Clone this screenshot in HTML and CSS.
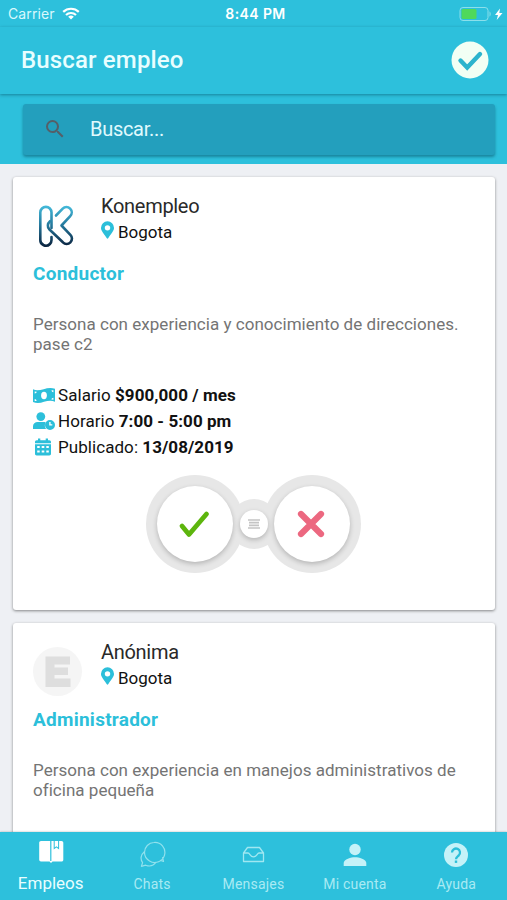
FILE: index.html
```html
<!DOCTYPE html>
<html lang="es">
<head>
<meta charset="utf-8">
<title>Buscar empleo</title>
<link rel="stylesheet" href="styles.css">
</head>
<body>
<div class="app">
  <div class="status">
    <div class="status-left"><span class="carrier">Carrier</span>
      <svg class="wifi" width="18" height="13" viewBox="0 0 18 13" fill="none" stroke="#fff" stroke-width="2.2"><path d="M1.2 4.9a11.2 11.2 0 0 1 15.6 0M4 8a7.2 7.2 0 0 1 10 0"/><path d="M9 12.6 6.2 9.8a4 4 0 0 1 5.6 0z" fill="#fff" stroke="none"/></svg>
    </div>
    <span class="clock">8:44 PM</span>
    <div class="status-right">
      <svg width="44" height="16" viewBox="0 0 44 16"><rect x="1" y="1.5" width="28" height="13" rx="3" fill="none" stroke="#8bdfeb"/><rect x="2.5" y="3" width="15" height="10" rx="1.5" fill="#4fd95b"/><path d="M30.5 5.5c1.6.6 1.6 4.4 0 5z" fill="#8bdfeb"/><path d="M41 2.5 36 9h3l-1.3 5L43.5 7h-3.2z" fill="#fff"/></svg>
    </div>
  </div>
  <header class="header">
    <h1 class="title">Buscar empleo</h1>
    <svg class="done" width="38" height="38" viewBox="0 0 38 38"><circle cx="19" cy="19" r="18.5" fill="#f2fff4"/><path d="m9.500 19.500 6.700 7L29 13" fill="none" stroke="#2cb4cd" stroke-width="4.400" stroke-linecap="round"/></svg>
  </header>
  <div class="search-area">
    <div class="search">
      <svg width="24" height="24" viewBox="0 0 24 24" fill="#555f68"><path d="M15.500 14h-.79l-.28-.27A6.470 6.470 0 0 0 16 9.500 6.500 6.500 0 1 0 9.500 16c1.610 0 3.090-.59 4.230-1.570l.27.28v.79l5 4.990L20.490 19l-4.990-5zm-6 0a4.500 4.500 0 1 1 0-9 4.500 4.500 0 0 1 0 9z"/></svg>
      <span class="placeholder">Buscar...</span>
    </div>
  </div>
  <main class="list">
    <article class="card">
      <div class="company">
        <svg class="logo" width="50" height="50" viewBox="0 0 50 50" fill="none" stroke="url(#k)" stroke-width="2.600" stroke-linecap="round" stroke-linejoin="round"><defs><linearGradient id="k" gradientUnits="userSpaceOnUse" x1="0" y1="5" x2="0" y2="46"><stop offset="0" stop-color="#45bddd"/><stop offset=".5" stop-color="#24779b"/><stop offset="1" stop-color="#0b2440"/></linearGradient></defs><path d="M18.500 28V12.500a5.600 5.600 0 0 0-11.200 0V40a5.600 5.600 0 0 0 9.600 4c1.100-1.100 1.600-2.300 1.600-4v-3"/><path d="m23 15.500 6.700-6.800a5.200 5.200 0 0 1 7.500 7.400L28.500 25.500l8.900 9.300a5.200 5.200 0 0 1-7.500 7.500L16.500 29.500c-2.500-2.600-2-6 .5-8.300"/></svg>
        <div class="who"><h2 class="name">Konempleo</h2><div class="place"><svg class="pin" width="13" height="18" viewBox="0 0 384 512"><path fill="#2cbfda" fill-rule="evenodd" d="M172 502C27 291 0 270 0 192a192 192 0 0 1 384 0c0 78-27 99-172 310-10 14-30 14-40 0zM192 272a80 80 0 1 0 0-160 80 80 0 0 0 0 160z"/></svg><span>Bogota</span></div></div>
      </div>
      <h3 class="job">Conductor</h3>
      <p class="desc">Persona con experiencia y conocimiento de direcciones.<br>pase c2</p>
      <ul class="facts">
        <li><svg width="22" height="17" viewBox="0 0 22 17"><path fill="#2cbfda" d="M0 2.300C7 5.800 14-1.600 22 1.800v13c-8-3.400-14 3.800-22 .3z"/><ellipse cx="11" cy="8.500" rx="2.900" ry="3.700" fill="#fff"/><path d="M1.700 4.500v2c1.200 0 1.900-.7 2-1.700zM1.700 14v-2c1 .1 1.800.9 1.900 2zM20.400 3.200v2.100c-1 0-1.800-.8-1.900-2zM20.400 12.700v-2c-1 .1-1.800.8-2 1.700z" fill="#fff"/></svg><span>Salario <b>$900,000 / mes</b></span></li>
        <li><svg width="22" height="18" viewBox="0 0 22 18" fill="#2cbfda"><circle cx="7.800" cy="4.600" r="4.400"/><path d="M0 17v-2.700c0-2.600 2.100-4.300 4.700-4.300h6.200c.8 0 1.300.1 1.800.4a6 6 0 0 0 .4 6.600z"/><path fill-rule="evenodd" d="M17 8a5 5 0 1 1 0 10 5 5 0 0 1 0-10zm-.8 2.100v3.500h3.100v-1.300h-1.700v-2.200z"/></svg><span>Horario <b>7:00 - 5:00 pm</b></span></li>
        <li><svg width="22" height="18" viewBox="1 0 22 18" fill="#2cbfda"><path fill-rule="evenodd" d="M3 6.300h16v9.500c0 1-.7 1.700-1.700 1.700H4.700c-1 0-1.700-.7-1.700-1.700zM5.200 8v2h2.500V8zm4.500 0v2h2.600V8zm4.600 0v2h2.500V8zm-9.100 4.500v2h2.500v-2zm4.500 0v2h2.600v-2zm4.600 0v2h2.500v-2z"/><path d="M3 5.200V4c0-1 .7-1.700 1.700-1.700H6V.5h2.300v1.800h5.400V.5H16v1.800h1.300c1 0 1.700.7 1.700 1.700v1.200z"/></svg><span>Publicado: <b>13/08/2019</b></span></li>
      </ul>
      <div class="actions">
        <div class="ring"><div class="knob"><svg width="36" height="32" viewBox="0 0 36 32"><path d="m5 18 7 8.500L29.500 6" fill="none" stroke="#5db50d" stroke-width="4.800" stroke-linecap="round" stroke-linejoin="round"/></svg></div></div>
        <div class="ring ring-small"><div class="knob"><svg width="12" height="10" viewBox="0 0 12 10" stroke="#c4c4c4" stroke-width="1.700"><path d="M0 1h12M1 3.700h10M1 6.300h10M0 9h12"/></svg></div></div>
        <div class="ring"><div class="knob"><svg width="30" height="30" viewBox="1 0 30 30"><path d="m5 5 20 20M25 5 5 25" stroke="#ec6880" stroke-width="6.200" stroke-linecap="round"/></svg></div></div>
      </div>
    </article>
    <article class="card">
      <div class="company">
        <svg class="logo" width="50" height="50" viewBox="0 0 50 50"><circle cx="24.500" cy="25.500" r="24.500" fill="#f5f5f5"/><path d="M12.500 10.500H37v8H21.500v3H35V29H21.500v3.500H37.500v8.500h-25z" fill="#dedede"/></svg>
        <div class="who"><h2 class="name">Anónima</h2><div class="place"><svg class="pin" width="13" height="18" viewBox="0 0 384 512"><path fill="#2cbfda" fill-rule="evenodd" d="M172 502C27 291 0 270 0 192a192 192 0 0 1 384 0c0 78-27 99-172 310-10 14-30 14-40 0zM192 272a80 80 0 1 0 0-160 80 80 0 0 0 0 160z"/></svg><span>Bogota</span></div></div>
      </div>
      <h3 class="job">Administrador</h3>
      <p class="desc">Persona con experiencia en manejos administrativos de<br>oficina pequeña</p>
    </article>
  </main>
  <nav class="tabs">
    <a class="tab active"><svg width="28" height="28" viewBox="0 0 28 28" fill="#fff"><path d="M4 3h9.200v20.500H4A1.800 1.800 0 0 1 2.200 21.700V4.800C2.200 3.800 3 3 4 3zM14.400 3h2.300v8.500l2.700-2 2.700 2V3H24.500c1 0 1.800.8 1.800 1.800v16.900c0 1-.8 1.800-1.800 1.800H14.400zM17.700 3h3.400v6.500l-1.700-1.300-1.700 1.300zM12 23h4l-2 2z"/></svg><span>Empleos</span></a>
    <a class="tab"><svg width="28" height="28" viewBox="0 0 28 28" fill="none" stroke="#91e1ed" stroke-width="1.200" stroke-linejoin="round"><path d="M16 2.500a10 10 0 1 1-4.500 18.400c-3.200-1.800-5-5-5-8.600A9.800 9.800 0 0 1 16 2.500zM22 20.300l3.500 1.200-1-4.300"/><path d="M6.500 11.500c-4 3.500-4.300 8-1.900 11.100l-1.200 3.700 4.300-1.100c4 1.600 8 .3 10.300-3"/></svg><span>Chats</span></a>
    <a class="tab"><svg width="28" height="28" viewBox="0 0 28 28" fill="none" stroke="#a0e7f1" stroke-width="1.300" stroke-linejoin="round"><path d="M4.500 13 8.500 7.500h12l4 5.500v8.500h-20zM4.500 13h4.500c2 0 2 3.800 5.500 3.800s3.500-3.800 5.500-3.800h4.500"/></svg><span>Mensajes</span></a>
    <a class="tab"><svg width="28" height="28" viewBox="0 0 28 28" fill="#c5f2f8"><circle cx="14" cy="9.500" r="5.700"/><path d="M2.700 26v-3c0-3.700 7.500-5.700 11.300-5.700S25.300 19.300 25.300 23v3z"/></svg><span>Mi cuenta</span></a>
    <a class="tab"><svg width="28" height="28" viewBox="0 0 28 28"><circle cx="14" cy="15" r="12" fill="#c5f2f8"/><path d="M10 12.500a4 4 0 1 1 6.700 3c-1.700 1.400-2.700 1.800-2.700 3.800" fill="none" stroke="#2cbfd9" stroke-width="2.300"/><path d="M12.800 20.500h2.400v2.400h-2.400z" fill="#2cbfd9"/></svg><span>Ayuda</span></a>
  </nav>
</div>
</body>
</html>
```
FILE: styles.css
```css
* { box-sizing: border-box; }
body { margin: 0; font-family: Roboto, "Liberation Sans", sans-serif; }
h1, h2, h3, p, ul { margin: 0; padding: 0; }
svg { display: block; flex: none; }
.app { width: 507px; height: 900px; display: flex; flex-direction: column; overflow: hidden; background: #eef0f4; }
.status { height: 27px; flex: none; background: #2dc0dc; color: #fff; display: grid; grid-template-columns: 1fr auto 1fr; align-items: center; padding: 0 4px 0 8px; }
.status-left { display: flex; align-items: center; gap: 7px; font-family: Inter, sans-serif; font-size: 14px; letter-spacing: .1px; color: #d9f8fc; }
.clock { font-family: Inter, sans-serif; font-weight: 600; font-size: 14px; letter-spacing: .4px; }
.status-right { display: flex; justify-content: flex-end; }
.header { height: 67px; flex: none; display: flex; align-items: center; justify-content: space-between; padding: 0 18px 2px 21px; background: #2dc0dc; box-shadow: 0 1px 3px rgba(0, 70, 90, .5); z-index: 1; }
.title { color: #e8feff; font-size: 24px; font-weight: 500; line-height: 28px; letter-spacing: .15px; }
.search-area { height: 70px; flex: none; background: #2dc0dc; padding: 10px 12px 9px 23px; }
.search { height: 51px; border-radius: 3px; background: #239fbd; box-shadow: 0 2px 3px rgba(0, 60, 80, .45); display: flex; align-items: center; gap: 23px; padding: 0 0 2px 20px; }
.placeholder { color: #e0fafd; font-size: 20px; line-height: 24px; letter-spacing: -.3px; }
.list { flex: 1; min-height: 0; overflow: hidden; padding: 12.5px 12px 0 13px; display: flex; flex-direction: column; gap: 12.5px; }
.card { flex: none; height: 433.5px; background: #fff; border-radius: 3px; box-shadow: 0 1px 3px rgba(0, 0, 0, .45); padding: 17.5px 20px 0; }
.company { display: flex; gap: 18px; height: 56px; }
.logo { margin-top: 6px; }
.name { font-size: 20px; line-height: 24px; font-weight: 400; letter-spacing: -.3px; color: #292929; }
.place { display: flex; gap: 4px; align-items: center; height: 26px; margin-top: 1px; font-size: 17px; color: #111; }
.pin { margin-top: -4px; }
.job { margin-top: 12px; color: #2cbfda; font-size: 19px; line-height: 24px; font-weight: 700; letter-spacing: .25px; }
.desc { margin-top: 27.5px; color: #747474; font-size: 17px; line-height: 20.5px; letter-spacing: .03px; white-space: nowrap; }
.facts { list-style: none; margin-top: 27.5px; font-size: 17px; letter-spacing: .06px; color: #111; }
.facts li { height: 26px; display: flex; align-items: center; gap: 3px; }
.actions { display: flex; align-items: center; justify-content: center; margin-top: 15px; padding-right: 1px; }
.ring { width: 98px; height: 98px; border-radius: 50%; background: #e7e7e7; display: grid; place-items: center; }
.ring-small { width: 50px; height: 50px; margin: 0 -15.5px; z-index: 1; }
.knob { width: 76px; height: 76px; border-radius: 50%; background: #fff; display: grid; place-items: center; box-shadow: 0 2px 5px rgba(0, 0, 0, .22); z-index: 2; }
.ring-small .knob { width: 28px; height: 28px; }
.tabs { height: 68px; flex: none; display: grid; grid-template-columns: repeat(5, 1fr); background: #2dc0dc; box-shadow: 0 0 2px rgba(0, 0, 0, .3); z-index: 1; }
.tab { display: flex; flex-direction: column; align-items: center; padding-top: 8px; color: #a9eaf3; font-size: 14px; letter-spacing: .2px; line-height: 18px; gap: 7px; }
.active { color: #e8feff; font-size: 17px; letter-spacing: 0; padding-top: 6px; gap: 8px; }
```
